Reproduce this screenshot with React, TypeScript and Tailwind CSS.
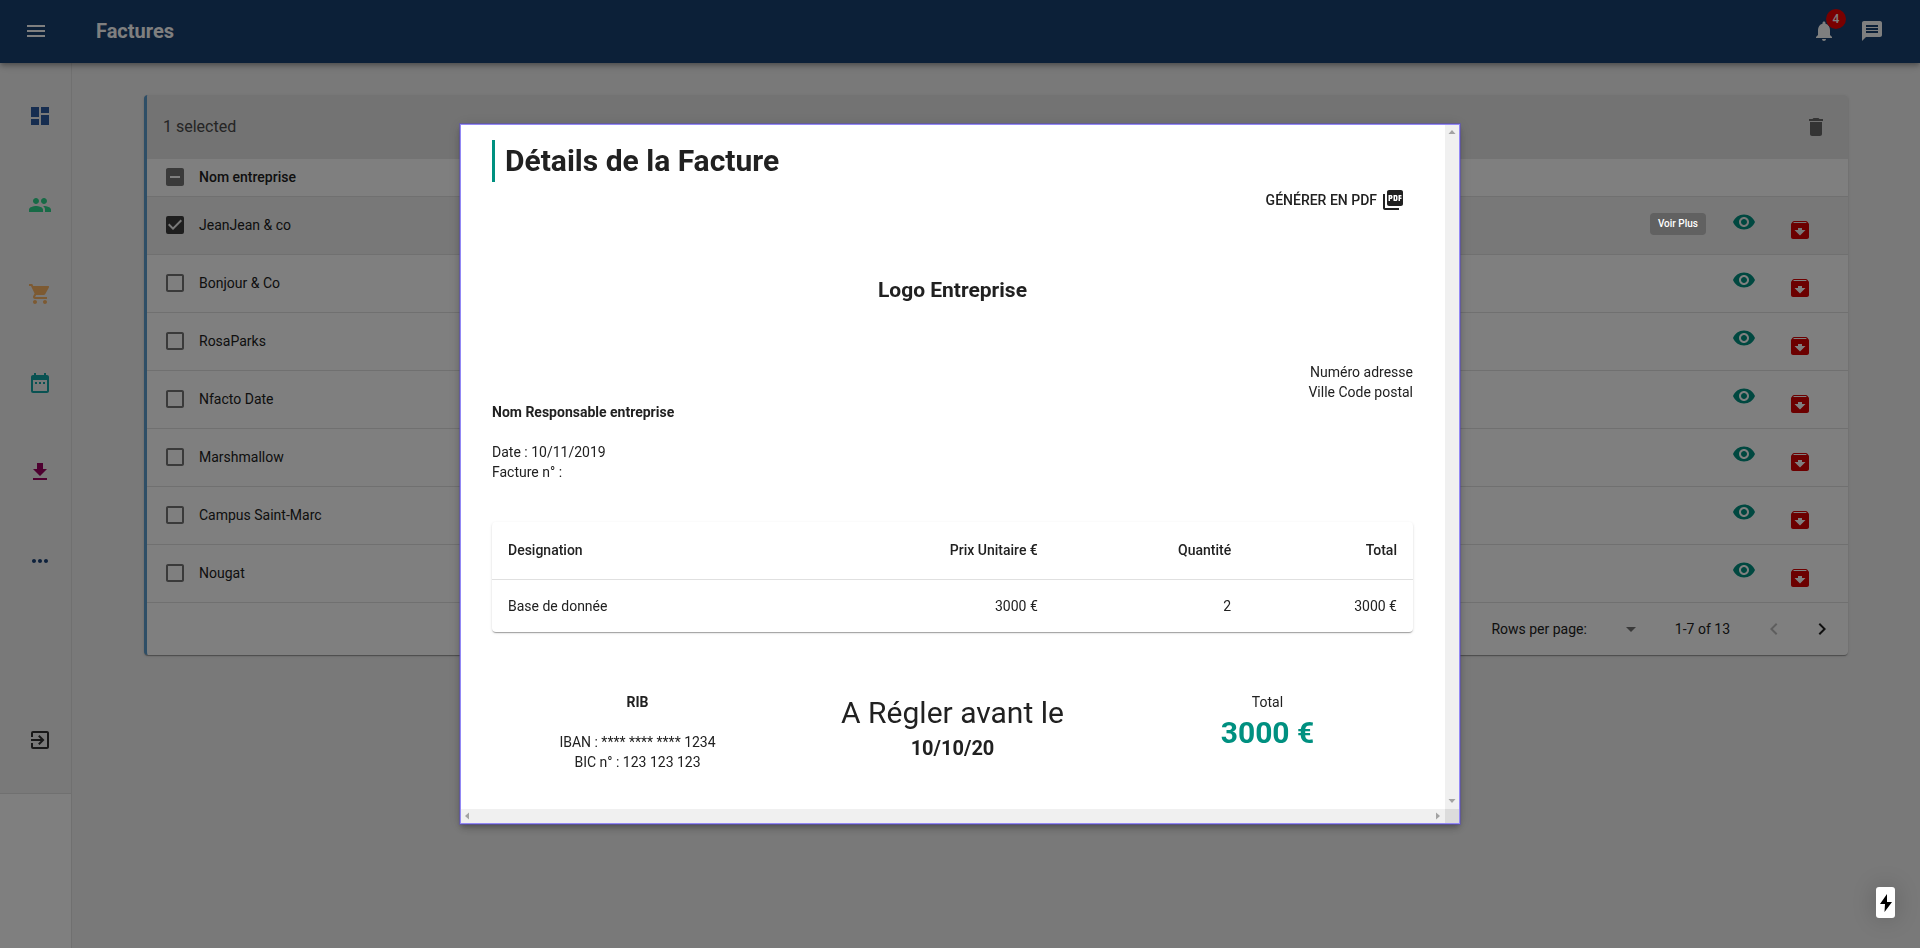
import type { ComponentType, ReactNode } from 'react';
import {
  MdArchive,
  MdArrowDropDown,
  MdCheckBox,
  MdCheckBoxOutlineBlank,
  MdDashboard,
  MdDateRange,
  MdDelete,
  MdExitToApp,
  MdGetApp,
  MdIndeterminateCheckBox,
  MdKeyboardArrowLeft,
  MdKeyboardArrowRight,
  MdMenu,
  MdMessage,
  MdMoreHoriz,
  MdNotifications,
  MdPeople,
  MdPictureAsPdf,
  MdShoppingCart,
  MdVisibility,
} from 'react-icons/md';

type Icon = ComponentType<{ className?: string }>;

const navItems: { label: string; icon: Icon; color: string }[] = [
  { label: 'Tableau de bord', icon: MdDashboard, color: 'text-[#2c5aa0]' },
  { label: 'Clients', icon: MdPeople, color: 'text-[#2ed58c]' },
  { label: 'Produits', icon: MdShoppingCart, color: 'text-[#fab464]' },
  { label: 'Calendrier', icon: MdDateRange, color: 'text-[#12a5a5]' },
  { label: 'Factures', icon: MdGetApp, color: 'text-[#9c0060]' },
  { label: 'Plus', icon: MdMoreHoriz, color: 'text-[#1b4278]' },
];

const companies = [
  'JeanJean & co',
  'Bonjour & Co',
  'RosaParks',
  'Nfacto Date',
  'Marshmallow',
  'Campus Saint-Marc',
  'Nougat',
];

const paper =
  'shadow-[0_2px_1px_-1px_rgba(0,0,0,0.2),0_1px_1px_0_rgba(0,0,0,0.14),0_1px_3px_0_rgba(0,0,0,0.12)]';

function Checkbox({ label, checked, mixed }: { label: string; checked?: boolean; mixed?: boolean }) {
  const Mark = mixed ? MdIndeterminateCheckBox : checked ? MdCheckBox : MdCheckBoxOutlineBlank;
  return (
    <span className="grid size-6">
      <input
        type="checkbox"
        aria-label={label}
        defaultChecked={checked}
        className="col-start-1 row-start-1 size-6 appearance-none"
      />
      <Mark
        className={`pointer-events-none col-start-1 row-start-1 size-6 ${checked ? 'text-[#3c3c3c]' : 'text-[#757575]'}`}
      />
    </span>
  );
}

function Header() {
  return (
    <header className="relative z-10 flex h-[63px] items-center bg-[#184070] pr-9 pb-px pl-6 text-white shadow-[0_2px_4px_-1px_rgba(0,0,0,0.2),0_4px_5px_0_rgba(0,0,0,0.14),0_1px_10px_0_rgba(0,0,0,0.12)]">
      <button type="button" aria-label="Menu">
        <MdMenu className="size-6" />
      </button>
      <h1 className="ml-12 grow text-xl font-bold">Factures</h1>
      <div className="flex items-center gap-6">
        <button type="button" aria-label="Notifications" className="relative">
          <MdNotifications className="size-6" />
          <span className="absolute -top-2.5 -right-2.5 flex size-5 items-center justify-center rounded-full bg-[#f20000] text-xs font-medium">
            4
          </span>
        </button>
        <button type="button" aria-label="Messages">
          <MdMessage className="size-6" />
        </button>
      </div>
    </header>
  );
}

function Sidebar() {
  return (
    <aside className="w-[72px] shrink-0 border-r border-[#e0e0e0] bg-white">
      <nav className="border-b border-[#e0e0e0] bg-[#f2f2f2] pt-2 pb-[9px]">
        {navItems.map(({ label, icon: Glyph, color }) => (
          <a key={label} href="#" aria-label={label} className="flex h-[89px] items-center pl-7">
            <Glyph className={`size-6 ${color}`} />
          </a>
        ))}
        <a href="#" aria-label="Déconnexion" className="mt-[90px] flex h-[89px] items-center pl-7">
          <MdExitToApp className="size-6 text-[#333]" />
        </a>
      </nav>
    </aside>
  );
}

function InvoiceList() {
  return (
    <section className={`overflow-hidden rounded border-l-[3px] border-[#5c9ccc] bg-white ${paper}`}>
      <div className="flex h-16 items-center justify-between bg-[#e6e6e6] pr-5 pl-4">
        <h2 className="text-base text-[#4a4a4a]">1 selected</h2>
        <button type="button" aria-label="Supprimer">
          <MdDelete className="size-6 text-[#696969]" />
        </button>
      </div>
      <table className="w-full border-collapse text-sm">
        <thead>
          <tr className="h-[37px] border-b border-[#e0e0e0]">
            <th className="w-[52px] py-0 pl-4">
              <Checkbox label="Tout sélectionner" mixed />
            </th>
            <th className="text-left font-medium">Nom entreprise</th>
            <th aria-label="Actions" />
          </tr>
        </thead>
        <tbody>
          {companies.map((name, i) => (
            <tr key={name} className={`h-[58px] border-b border-[#e0e0e0] ${i === 0 ? 'bg-[#f0f0f0]' : ''}`}>
              <td className="w-[52px] pl-4">
                <Checkbox label={name} checked={i === 0} />
              </td>
              <td>{name}</td>
              <td className="pt-0.5 pr-9">
                <div className="flex justify-end gap-8">
                  <button type="button" aria-label={`Voir ${name}`} className="relative pb-2">
                    <MdVisibility className="size-6 text-[#009080]" />
                    {i === 0 && (
                      <span
                        role="tooltip"
                        className="absolute top-[3px] right-[50px] z-30 rounded bg-[#616161] px-2 py-1 text-[10px] leading-[14px] font-medium whitespace-nowrap text-white"
                      >
                        Voir Plus
                      </span>
                    )}
                  </button>
                  <button type="button" aria-label={`Archiver ${name}`} className="pt-2">
                    <MdArchive className="size-6 text-[#d80000]" />
                  </button>
                </div>
              </td>
            </tr>
          ))}
        </tbody>
      </table>
      <div className="flex h-[52px] items-center justify-end pr-3.5 text-sm">
        <label htmlFor="rows">Rows per page:</label>
        <span className="mr-8 ml-2 grid w-12 items-center justify-items-end">
          <select id="rows" className="col-start-1 row-start-1 h-6 w-12 appearance-none bg-transparent">
            <option value="7" label=" " />
          </select>
          <MdArrowDropDown className="pointer-events-none col-start-1 row-start-1 size-6 text-[#757575]" />
        </span>
        <span>1-7 of 13</span>
        <button type="button" aria-label="Page précédente" disabled className="ml-8">
          <MdKeyboardArrowLeft className="size-6 text-[#bdbdbd]" />
        </button>
        <button type="button" aria-label="Page suivante" className="ml-6">
          <MdKeyboardArrowRight className="size-6" />
        </button>
      </div>
    </section>
  );
}

function Arrow({ points }: { points: string }) {
  return (
    <svg viewBox="0 0 14 14" className="size-3.5 fill-[#a3a3a3]" aria-hidden="true">
      <polygon points={points} />
    </svg>
  );
}

function Column({ children }: { children: ReactNode }) {
  return <div className="flex flex-col items-center text-center">{children}</div>;
}

function InvoiceDialog() {
  return (
    <div
      role="dialog"
      aria-modal="true"
      aria-labelledby="invoice-title"
      className="grid w-[1000px] max-w-full grid-cols-[1fr_14px] grid-rows-[1fr_14px] border border-[#9388f5] bg-white text-sm leading-5 shadow-[0_0_0_1px_rgba(90,75,200,0.5),0_3px_5px_-1px_rgba(0,0,0,0.2),0_5px_8px_0_rgba(0,0,0,0.14),0_1px_14px_0_rgba(0,0,0,0.12)]"
    >
      <div className="pt-[15px] pr-8 pb-[37px] pl-[31px]">
        <h2 id="invoice-title" className="border-l-[3px] border-[#009080] pl-2.5 text-3xl leading-[42px] font-bold">
          Détails de la Facture
        </h2>
        <div className="flex justify-end">
          <button type="button" className="flex h-9 items-center gap-1 px-2 font-medium">
            GÉNÉRER EN PDF
            <MdPictureAsPdf className="size-6" />
          </button>
        </div>
        <h3 className="mt-15 text-center text-[21px] leading-6 font-bold">Logo Entreprise</h3>
        <p className="mt-15 text-right">
          Numéro adresse
          <br />
          Ville Code postal
        </p>
        <p className="font-bold">Nom Responsable entreprise</p>
        <p className="mt-5">Date : 10/11/2019</p>
        <p>Facture n° :</p>
        <div className={`mt-10 rounded ${paper}`}>
          <table className="w-full table-fixed border-collapse text-right">
            <colgroup>
              <col />
              <col className="w-[21%]" />
              <col className="w-[21%]" />
              <col className="w-[18%]" />
            </colgroup>
            <thead>
              <tr className="h-[57px] border-b border-[#e0e0e0]">
                <th className="px-4 text-left font-medium">Designation</th>
                <th className="px-4 font-medium">Prix Unitaire €</th>
                <th className="px-4 font-medium">Quantité</th>
                <th className="px-4 font-medium">Total</th>
              </tr>
            </thead>
            <tbody>
              <tr className="h-[53px]">
                <td className="px-4 text-left">Base de donnée</td>
                <td className="px-4">3000 €</td>
                <td className="px-4">2</td>
                <td className="px-4">3000 €</td>
              </tr>
            </tbody>
          </table>
        </div>
        <div className="mt-15 grid grid-cols-3 gap-6">
          <Column>
            <p className="font-bold">RIB</p>
            <p className="mt-5">IBAN : **** **** **** 1234</p>
            <p>BIC n° : 123 123 123</p>
          </Column>
          <Column>
            <p className="text-3xl leading-[42px]">A Régler avant le</p>
            <p className="text-xl leading-7 font-bold">10/10/20</p>
          </Column>
          <Column>
            <p>Total</p>
            <p className="text-3xl leading-[42px] font-bold text-[#009080]">3000 €</p>
          </Column>
        </div>
      </div>
      <div className="flex flex-col justify-between bg-[#f0f0f0]">
        <Arrow points="3.5,9 7,5 10.5,9" />
        <Arrow points="3.5,4 7,8 10.5,4" />
      </div>
      <div className="flex justify-between bg-[#f0f0f0]">
        <Arrow points="8,3.5 4,7 8,10.5" />
        <Arrow points="5,3.5 9,7 5,10.5" />
      </div>
      <div className="bg-[#dcdcdc]" />
    </div>
  );
}

export default function App() {
  return (
    <div className="flex min-h-screen flex-col bg-[#f2f2f2] font-[Roboto,sans-serif] text-[#212121]">
      <Header />
      <div className="flex grow">
        <Sidebar />
        <main className="grow px-18 pt-8">
          <InvoiceList />
        </main>
      </div>
      <div className="fixed inset-0 z-20 flex items-center justify-center bg-black/50">
        <InvoiceDialog />
      </div>
      <button
        type="button"
        aria-label="Actions rapides"
        className="fixed right-[25px] bottom-[30px] z-30 flex h-[31px] w-[19px] items-center justify-center rounded-[3px] bg-white shadow-[0_0_24px_rgba(0,0,0,0.2)]"
      >
        <svg viewBox="0 0 12 18" className="h-[18px] w-3" aria-hidden="true">
          <path d="M7 0 0 10h5l-.5 8L12 8H7z" />
        </svg>
      </button>
    </div>
  );
}
